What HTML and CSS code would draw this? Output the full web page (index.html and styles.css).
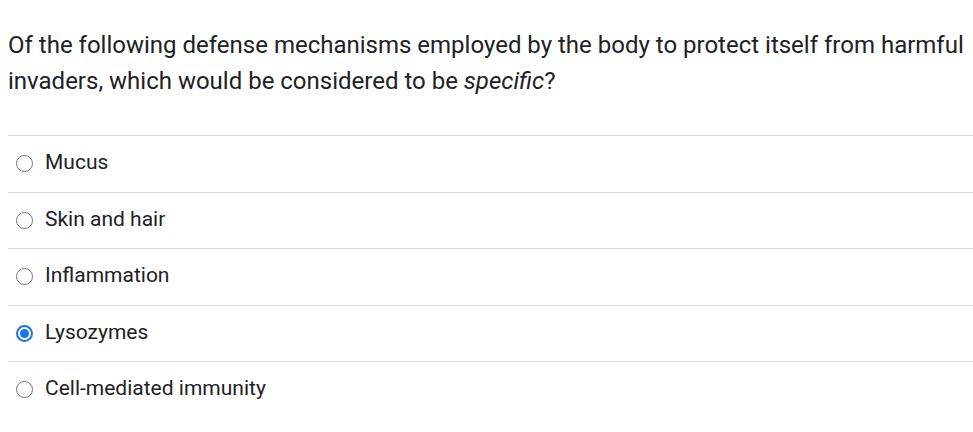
FILE: index.html
```html
<!DOCTYPE html>
<html lang="en">
<head>
<meta charset="utf-8">
<link rel="stylesheet" href="styles.css">
</head>
<body>
<div class="question">
  <p class="prompt">Of the following defense mechanisms employed by the body to protect itself from harmful invaders, which would be considered to be <em>specific</em>?</p>
  <ul class="options">
    <li class="option"><span class="radio"></span><span class="label">Mucus</span></li>
    <li class="option"><span class="radio"></span><span class="label">Skin and hair</span></li>
    <li class="option"><span class="radio"></span><span class="label">Inflammation</span></li>
    <li class="option"><span class="radio checked"></span><span class="label">Lysozymes</span></li>
    <li class="option"><span class="radio"></span><span class="label">Cell-mediated immunity</span></li>
  </ul>
</div>
</body>
</html>
```
FILE: styles.css
```css
html, body {
  margin: 0;
  background: #ffffff;
}
body {
  padding: 27px 0 0 8px;
  font-family: Roboto, "Noto Sans", sans-serif;
  color: #202124;
}
.prompt {
  margin: 0 0 36px 0;
  font-size: 24px;
  line-height: 36px;
}
.options {
  list-style: none;
  margin: 0;
  padding: 0;
}
.option {
  display: flex;
  align-items: center;
  gap: 12px;
  height: 56.5px;
  box-sizing: border-box;
  border-top: 1px solid #dadce0;
  padding-left: 8px;
  font-size: 21px;
}
.radio {
  width: 17px;
  height: 17px;
  box-sizing: border-box;
  border: 1.5px solid #757575;
  border-radius: 50%;
  display: flex;
  align-items: center;
  justify-content: center;
  flex: none;
}
.radio.checked {
  border: 2px solid #1a73e8;
}
.radio.checked::after {
  content: "";
  width: 9px;
  height: 9px;
  border-radius: 50%;
  background: #1a73e8;
}
.label {
  line-height: 24px;
  margin-top: -3px;
}
```
